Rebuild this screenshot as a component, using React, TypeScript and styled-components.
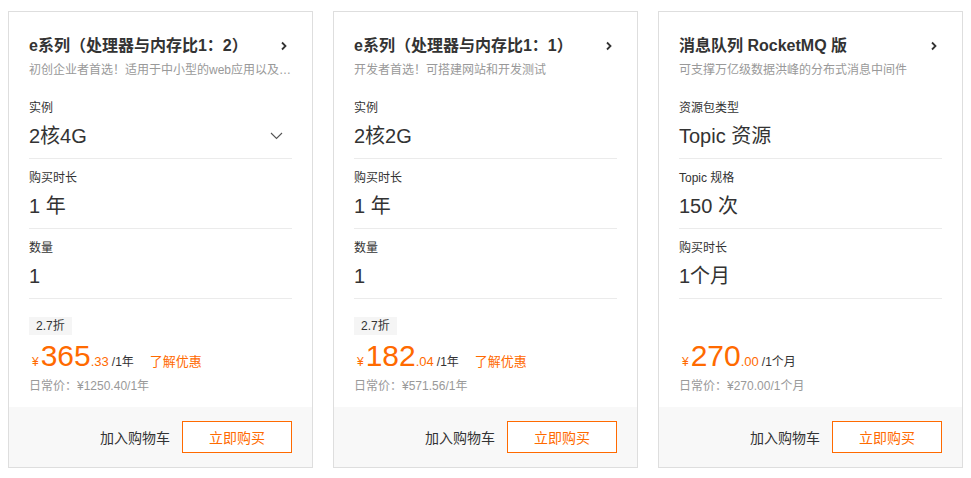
import React from 'react';
import styled, { createGlobalStyle } from 'styled-components';

const GlobalStyle = createGlobalStyle`
  * {
    box-sizing: border-box;
  }
  body {
    margin: 0;
    background: #fff;
    font-family: 'Liberation Sans', 'Noto Sans CJK SC', sans-serif;
    color: #333;
  }
`;

interface Field {
  label: string;
  value: string;
  select?: boolean;
}

interface Product {
  title: string;
  desc: string;
  fields: Field[];
  discount?: string;
  priceInt: string;
  priceDec: string;
  unit: string;
  promo?: boolean;
  original: string;
}

const products: Product[] = [
  {
    title: 'e系列（处理器与内存比1：2）',
    desc: '初创企业者首选！适用于中小型的web应用以及…',
    fields: [
      { label: '实例', value: '2核4G', select: true },
      { label: '购买时长', value: '1 年' },
      { label: '数量', value: '1' },
    ],
    discount: '2.7折',
    priceInt: '365',
    priceDec: '.33',
    unit: '/1年',
    promo: true,
    original: '日常价：¥1250.40/1年',
  },
  {
    title: 'e系列（处理器与内存比1：1）',
    desc: '开发者首选！可搭建网站和开发测试',
    fields: [
      { label: '实例', value: '2核2G' },
      { label: '购买时长', value: '1 年' },
      { label: '数量', value: '1' },
    ],
    discount: '2.7折',
    priceInt: '182',
    priceDec: '.04',
    unit: '/1年',
    promo: true,
    original: '日常价：¥571.56/1年',
  },
  {
    title: '消息队列 RocketMQ 版',
    desc: '可支撑万亿级数据洪峰的分布式消息中间件',
    fields: [
      { label: '资源包类型', value: 'Topic 资源' },
      { label: 'Topic 规格', value: '150 次' },
      { label: '购买时长', value: '1个月' },
    ],
    priceInt: '270',
    priceDec: '.00',
    unit: '/1个月',
    original: '日常价：¥270.00/1个月',
  },
];

const Page = styled.div`
  display: flex;
  gap: 20px;
  padding: 11px 8px;
`;

const Card = styled.div`
  width: 305px;
  height: 457px;
  border: 1px solid #dedede;
  display: flex;
  flex-direction: column;
`;

const Body = styled.div`
  flex: 1;
  padding: 22px 20px 0;
`;

const TitleRow = styled.div`
  display: flex;
  align-items: center;
  justify-content: space-between;
  height: 24px;
`;

const Title = styled.h3`
  margin: 0;
  font-size: 16px;
  font-weight: bold;
  line-height: 24px;
  color: #333;
`;

const Desc = styled.p`
  margin: 2px 0 9px;
  font-size: 12px;
  line-height: 20px;
  color: #999;
  white-space: nowrap;
`;

const Section = styled.div`
  padding: 10px 0 8px;
  border-bottom: 1px solid #ebebeb;
`;

const Label = styled.div`
  font-size: 12px;
  line-height: 18px;
  color: #333;
`;

const Value = styled.div`
  margin-top: 5px;
  display: flex;
  align-items: center;
  justify-content: space-between;
  font-size: 20px;
  line-height: 28px;
  color: #333;
`;

const Pricing = styled.div`
  padding-top: 17px;
`;

const Badge = styled.span<{ $hidden?: boolean }>`
  display: inline-block;
  height: 18px;
  padding: 0 7px;
  font-size: 12px;
  line-height: 18px;
  background: #f5f5f5;
  color: #333;
  visibility: ${(p) => (p.$hidden ? 'hidden' : 'visible')};
`;

const PriceRow = styled.div`
  margin-top: 3px;
  display: flex;
  align-items: baseline;
  height: 36px;
  line-height: 36px;
  color: #ff6a00;
`;

const Yen = styled.span`
  font-size: 12px;
  margin: 0 2px 0 3px;
`;

const Big = styled.span`
  font-size: 30px;
`;

const Small = styled.span`
  font-size: 13px;
`;

const Unit = styled.span`
  font-size: 12px;
  color: #333;
  margin-left: 3px;
`;

const Promo = styled.a`
  font-size: 13px;
  color: #ff6a00;
  margin-left: 16px;
`;

const Original = styled.div`
  margin-top: 3px;
  font-size: 12px;
  line-height: 18px;
  color: #999;
`;

const Footer = styled.div`
  height: 60px;
  background: #f8f8f8;
  display: flex;
  align-items: center;
  justify-content: flex-end;
  gap: 12px;
  padding: 0 20px;
`;

const CartLink = styled.span`
  font-size: 14px;
  color: #333;
`;

const BuyButton = styled.button`
  width: 110px;
  height: 32px;
  border: 1px solid #ff6a00;
  background: #fff;
  color: #ff6a00;
  font-family: inherit;
  font-size: 14px;
  padding: 0;
  cursor: pointer;
`;

const ChevronRight = () => (
  <svg width="8" height="10" viewBox="0 0 8 10" style={{ marginRight: 4 }}>
    <path d="M2 1.5 L5.5 5 L2 8.5" fill="none" stroke="#333" strokeWidth="1.8" />
  </svg>
);

const ChevronDown = () => (
  <svg width="13" height="8" viewBox="0 0 13 8" style={{ marginRight: 9 }}>
    <path d="M1 1 L6.5 6.5 L12 1" fill="none" stroke="#555" strokeWidth="1.1" />
  </svg>
);

function ProductCard({ product }: { product: Product }) {
  return (
    <Card>
      <Body>
        <TitleRow>
          <Title>{product.title}</Title>
          <ChevronRight />
        </TitleRow>
        <Desc>{product.desc}</Desc>
        {product.fields.map((f) => (
          <Section key={f.label}>
            <Label>{f.label}</Label>
            <Value>
              <span>{f.value}</span>
              {f.select && <ChevronDown />}
            </Value>
          </Section>
        ))}
        <Pricing>
          <Badge $hidden={!product.discount}>{product.discount || '-'}</Badge>
          <PriceRow>
            <Yen>¥</Yen>
            <Big>{product.priceInt}</Big>
            <Small>{product.priceDec}</Small>
            <Unit>{product.unit}</Unit>
            {product.promo && <Promo>了解优惠</Promo>}
          </PriceRow>
          <Original>{product.original}</Original>
        </Pricing>
      </Body>
      <Footer>
        <CartLink>加入购物车</CartLink>
        <BuyButton>立即购买</BuyButton>
      </Footer>
    </Card>
  );
}

export default function App() {
  return (
    <>
      <GlobalStyle />
      <Page>
        {products.map((p) => (
          <ProductCard key={p.title} product={p} />
        ))}
      </Page>
    </>
  );
}
